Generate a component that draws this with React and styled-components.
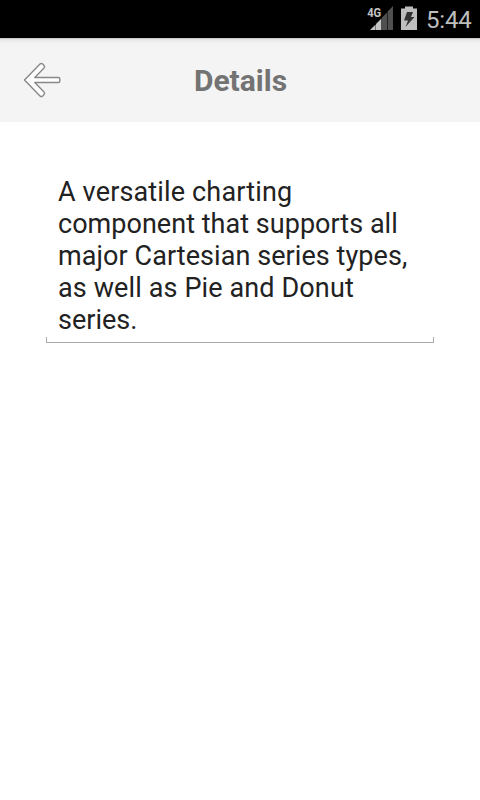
import React from "react";
import styled, { createGlobalStyle } from "styled-components";

const GlobalStyle = createGlobalStyle`
  * { box-sizing: border-box; }
  body { margin: 0; background: #fff; font-family: Roboto, sans-serif; }
`;

const Screen = styled.div`
  width: 480px;
  height: 800px;
  display: flex;
  flex-direction: column;
  overflow: hidden;
  background: #fff;
`;

const StatusBar = styled.div`
  height: 38px;
  flex: none;
  display: flex;
  justify-content: flex-end;
  align-items: flex-start;
  background: #000;
`;

const StatusIcons = styled.svg`
  width: 60px;
  height: 38px;
  display: block;
`;

const Clock = styled.div`
  width: 54px;
  padding: 1px 0 0 0;
  font-size: 24px;
  line-height: 38px;
  letter-spacing: -0.2px;
  color: #bebebe;
  white-space: nowrap;
`;

const Header = styled.header`
  height: 84px;
  flex: none;
  display: grid;
  grid-template-columns: 84px 1fr 84px;
  align-items: center;
  background: linear-gradient(#b8b8b8 0, #dedede 1px, #e8e8e8 2px, #efefef 4px, #f4f4f4 7px);
`;

const BackButton = styled.button`
  width: 84px;
  height: 84px;
  padding: 0;
  border: 0;
  background: none;
`;

const BackIcon = styled.svg`
  width: 84px;
  height: 84px;
  display: block;
`;

const Title = styled.h1`
  margin: 0;
  padding: 2px 0 0 1px;
  font-size: 30px;
  font-weight: 700;
  line-height: 36px;
  text-align: center;
  color: #737373;
`;

const Content = styled.main`
  flex: 1;
  padding: 54px 46px 0;
`;

const Field = styled.div`
  height: 167px;
  display: flex;
  flex-direction: column;
`;

const FieldText = styled.div`
  flex: 1;
  padding-left: 12px;
  font-size: 27px;
  line-height: 32px;
  color: #222;
`;

const Line = styled.span`
  display: block;
  white-space: nowrap;
  letter-spacing: ${(p) => p.$spacing || 0}px;
`;

const Underline = styled.div`
  height: 6px;
  margin-top: -6px;
  border: 1px solid #aaa;
  border-top: 0;
`;

const lines = [
  { text: "A versatile charting", spacing: 0.15 },
  { text: "component that supports all", spacing: 0.03 },
  { text: "major Cartesian series types,", spacing: 0.07 },
  { text: "as well as Pie and Donut", spacing: 0.12 },
  { text: "series.", spacing: 0 },
];

export default function App() {
  return (
    <Screen>
      <GlobalStyle />
      <StatusBar>
        <StatusIcons viewBox="366 0 60 38">
          <path d="M382 17.5L387 12.5V30H382ZM387.6 11.5L393 6V30H387.6Z" fill="#505050" />
          <path d="M370 30L375.6 24.4V30ZM376 24L381.4 18.6V30H376Z" fill="#c4c4c4" />
          <text x="367.2" y="17.3" fontFamily="Roboto" fontWeight="700" fontSize="13.5" textLength="14" lengthAdjust="spacingAndGlyphs" fill="#c4c4c4">4G</text>
          <path d="M401 8.5H405V6.5H413V8.5H417V30H401Z" fill="#bebebe" />
          <path d="M407 12H413L411 17H414.5L405.5 27L408 20.5H404Z" fill="#333" />
        </StatusIcons>
        <Clock>5:44</Clock>
      </StatusBar>
      <Header>
        <BackButton aria-label="Back">
          <BackIcon viewBox="0 38 84 84">
            <path
              d="M24.5 80L40 64.1Q41.3 62.8 42.7 64.1L44 65.4Q45.3 66.8 44 68.1L34.8 77.5H58.2Q59.8 77.5 59.8 79V81Q59.8 82.5 58.2 82.5H34.8L44 91.9Q45.3 93.2 44 94.6L42.7 95.9Q41.3 97.2 40 95.9Z"
              fill="#fdfdfd"
              stroke="#888"
              strokeWidth="1.4"
              strokeLinejoin="round"
            />
          </BackIcon>
        </BackButton>
        <Title>Details</Title>
      </Header>
      <Content>
        <Field>
          <FieldText>
            {lines.map((l) => (
              <Line key={l.text} $spacing={l.spacing}>{l.text}</Line>
            ))}
          </FieldText>
          <Underline />
        </Field>
      </Content>
    </Screen>
  );
}
